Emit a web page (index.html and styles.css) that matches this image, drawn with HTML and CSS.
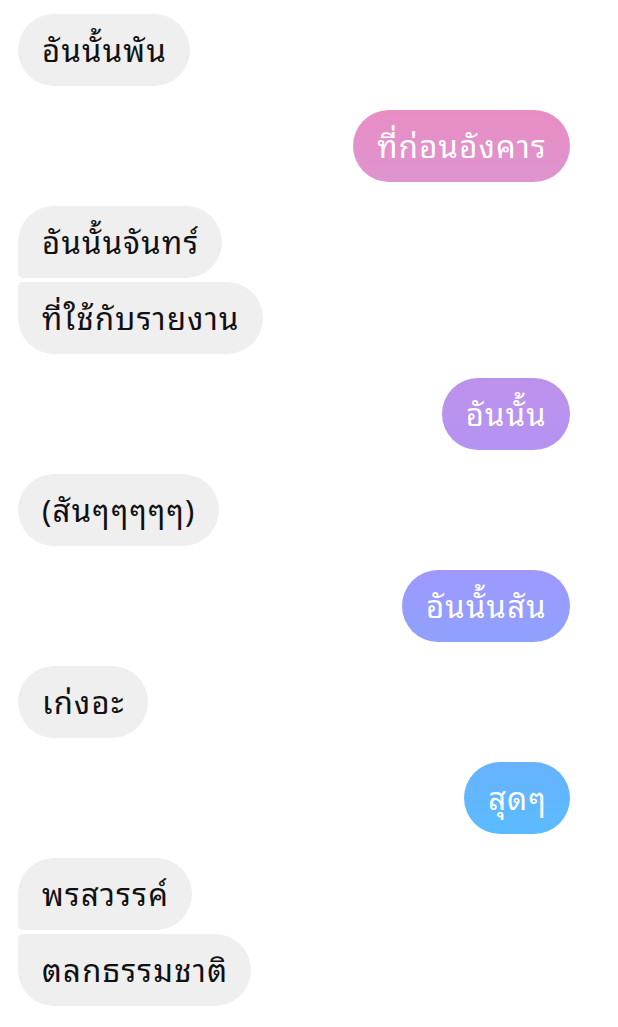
FILE: index.html
```html
<!DOCTYPE html>
<html>
	<head>
		<meta charset="utf-8">
		<title>แชท</title>
		<link rel="stylesheet" href="styles.css">
	</head>
	<body>
		<div class="chat">
			<div class="group in">
				<div class="msg">อันนั้นพัน</div>
			</div>
			<div class="group out">
				<div class="msg">ที่ก่อนอังคาร</div>
			</div>
			<div class="group in">
				<div class="msg">อันนั้นจันทร์</div>
				<div class="msg">ที่ใช้กับรายงาน</div>
			</div>
			<div class="group out">
				<div class="msg">อันนั้น</div>
			</div>
			<div class="group in">
				<div class="msg">(สันๆๆๆๆๆ)</div>
			</div>
			<div class="group out">
				<div class="msg">อันนั้นสัน</div>
			</div>
			<div class="group in">
				<div class="msg">เก่งอะ</div>
			</div>
			<div class="group out">
				<div class="msg">สุดๆ</div>
			</div>
			<div class="group in">
				<div class="msg">พรสวรรค์</div>
				<div class="msg">ตลกธรรมชาติ</div>
			</div>
		</div>
	</body>
</html>
```

FILE: styles.css
```css
*{
	padding: 0;
	margin: 0;
	box-sizing: border-box;
}
html,body{
	background: #fff;
}
body{
	font-family: "Noto Sans Thai Looped", "Noto Sans", sans-serif;
	font-size: 31px;
	letter-spacing: 1.3px;
}
.chat{
	display: flex;
	flex-direction: column;
	gap: 24px;
	padding: 14px 48px 0 18px;
}
.group{
	display: flex;
	flex-direction: column;
	gap: 4px;
}
.group.in{
	align-items: flex-start;
}
.group.out{
	align-items: flex-end;
}
.msg{
	height: 72px;
	line-height: 68px;
	padding: 0 23px 0 24px;
	border-radius: 36px;
	white-space: nowrap;
}
.in .msg{
	background-color: #efefef;
	color: #111;
}
.in .msg:first-child:not(:last-child){
	border-bottom-left-radius: 5px;
}
.in .msg:last-child:not(:first-child){
	border-top-left-radius: 5px;
}
.out .msg{
	color: #fff;
	background-image: linear-gradient(to bottom, #ea8cc2 100px, #dc96d2 200px, #bd92ec 380px, #b493f2 450px, #9c99fe 580px, #8ea2fd 650px, #66b3fe 770px, #5abcff 840px);
	background-attachment: fixed;
}
```
